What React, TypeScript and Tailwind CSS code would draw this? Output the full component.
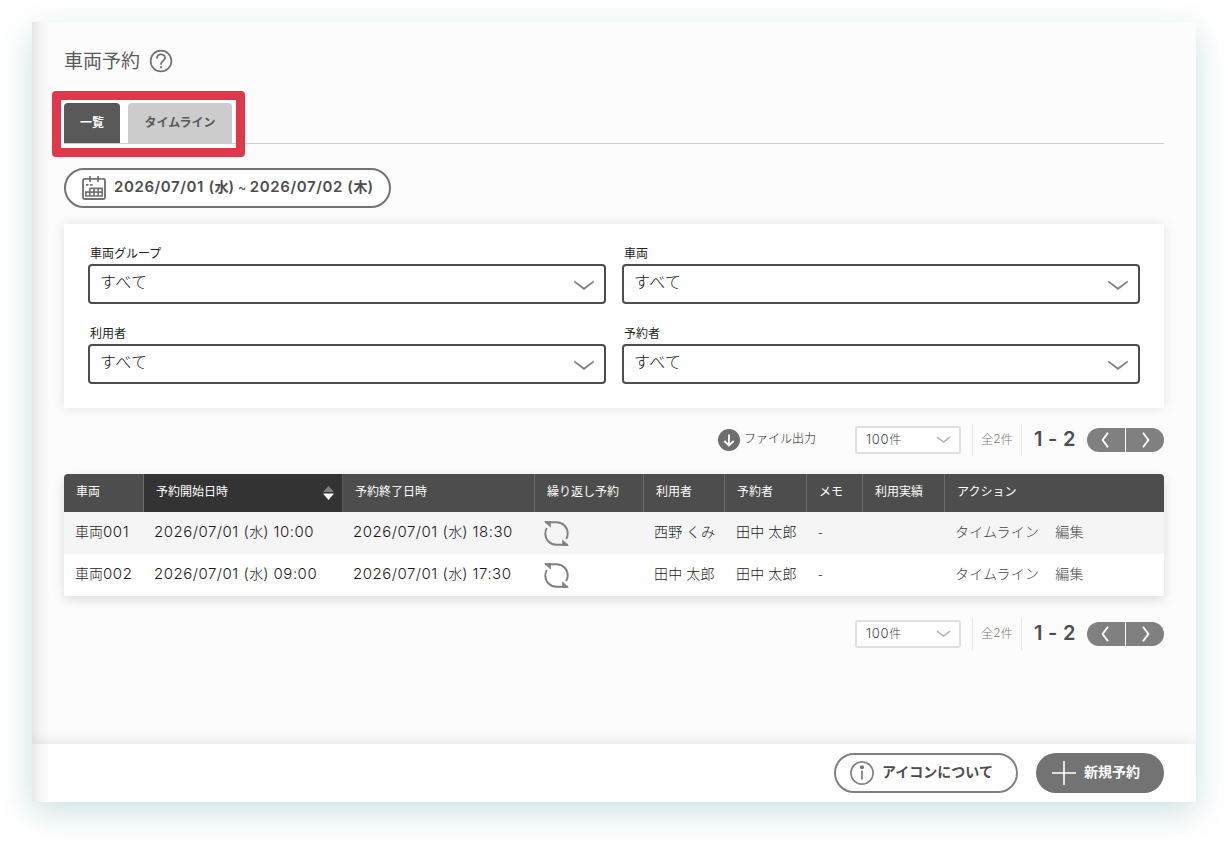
import { ReactNode } from "react";

type Reservation = {
  vehicle: string;
  start: string[];
  end: string[];
  user: string;
  reservedBy: string;
  memo: string;
};

const reservations: Reservation[] = [
  {
    vehicle: "001",
    start: ["2026/07/01", "10:00"],
    end: ["2026/07/01", "18:30"],
    user: "西野 くみ",
    reservedBy: "田中 太郎",
    memo: "-",
  },
  {
    vehicle: "002",
    start: ["2026/07/01", "09:00"],
    end: ["2026/07/01", "17:30"],
    user: "田中 太郎",
    reservedBy: "田中 太郎",
    memo: "-",
  },
];

const columns =
  "grid grid-cols-[80px_199px_192px_109px_81px_82px_56px_82px_219px]";

function HelpIcon() {
  return (
    <svg width="24" height="24" viewBox="0 0 24 24" fill="none" stroke="#737373">
      <circle cx="12" cy="12" r="10.4" strokeWidth="1.7" />
      <path d="M8 9.600c0-2.500 1.700-4.200 4-4.200s4 1.500 4 3.600c0 2.800-3.900 3-3.900 5.800v1" strokeWidth="1.8" />
      <path d="M12.100 17.200v2" strokeWidth="2" />
    </svg>
  );
}

function CalendarIcon() {
  return (
    <svg width="24" height="24" viewBox="0 0 24 24" fill="none" stroke="#737373" strokeWidth="1.9">
      <path d="M5 2.900H2.500a1.500 1.500 0 0 0-1.500 1.500v17.100A1.500 1.500 0 0 0 2.500 23h19a1.500 1.500 0 0 0 1.500-1.500V4.400a1.500 1.500 0 0 0-1.500-1.500h-2.300" />
      <path d="M5 2.900h14M8 0v6M16 0v6M4 8.800h2.600M8 8.800h2.600" strokeWidth="1.7" />
      <path d="M7.800 12.300h12.400v7.700H3.800v-3.900h16.400M7.800 12.300V20M12 12.300V20M16.200 12.300V20" strokeWidth="1.7" />
    </svg>
  );
}

function RepeatIcon() {
  return (
    <svg width="25" height="25" viewBox="0 0 25 25" fill="none" stroke="#808080" strokeWidth="1.900">
      <path d="M1 1.200h11.500c6.400 0 11.200 5 11.200 11.300 0 2.300-.5 4-1.500 5.600" />
      <path d="M24 23.800H12.500C6.100 23.800 1.300 18.800 1.300 12.500c0-2.300.5-4 1.500-5.600" />
      <path d="M0 .3h6.800v6.500zM25 24.700h-6.800v-6.500z" fill="#808080" stroke="none" />
    </svg>
  );
}

function DownloadIcon() {
  return (
    <svg width="22" height="22" viewBox="0 0 22 22" fill="none">
      <circle cx="11" cy="11" r="11" fill="#6e6e6e" />
      <path d="M11 5.500v10.800M6.300 12l4.700 4.500 4.700-4.500" stroke="#fff" strokeWidth="1.8" />
    </svg>
  );
}

function InfoIcon() {
  return (
    <svg width="24" height="24" viewBox="0 0 24 24" fill="none" stroke="#808080">
      <circle cx="12" cy="12" r="11.1" strokeWidth="1.6" />
      <circle cx="12" cy="6.200" r="2" fill="#737373" stroke="none" />
      <path d="M12 9.500v9" strokeWidth="1.8" />
    </svg>
  );
}

function SelectField({ label }: { label: string }) {
  return (
    <div>
      <div className="h-[18px] pl-[2px] text-xs leading-[13px] text-[#222]">{label}</div>
      <div className="flex h-10 items-center justify-between rounded border-2 border-[#4d4d4d] bg-white pr-[9px] pl-[10px]">
        <span className="pb-[6px] text-[16px] font-light tracking-[0.4px] text-[#111]">すべて</span>
        <svg className="mt-[3px]" width="22" height="11" viewBox="0 0 22 11" fill="none" stroke="#808080" strokeWidth="1.8">
          <path d="M1.200 1.400 11 8.800l9.800-7.400" />
        </svg>
      </div>
    </div>
  );
}

function Pager() {
  return (
    <div className="flex h-8 items-center">
      <div className="flex h-7 w-[106px] items-center justify-between rounded-[3px] border-2 border-[#e0e0e0] bg-white pr-[8px] pl-[9px] text-[12px] text-[#444]">
        <span className="pb-[1px] font-light">
          <span className="font-[Inter] text-[13px] tracking-[0.7px]">100</span>件
        </span>
        <svg width="15" height="8" viewBox="0 0 15 8" fill="none" stroke="#b3b3b3" strokeWidth="1.500">
          <path d="M1 1.200 7.500 6 14 1.200" />
        </svg>
      </div>
      <div className="ml-[11px] flex h-8 w-[50px] items-center justify-center border-x border-[#e6e6e6] pb-[3px] text-[12px] font-light text-[#777]">
        全<span className="font-[Inter]">2</span>件
      </div>
      <div className="w-[65px] pb-[3px] pl-[12px] font-[Inter] text-[20px] leading-none font-semibold tracking-[0.3px] whitespace-nowrap text-[#4d4d4d]">
        1 - 2
      </div>
      <div className="flex h-6 w-[77px] overflow-hidden rounded-full bg-[#808080]">
        <button className="flex w-[39px] items-center justify-center border-r border-[#fcfcfc] pr-[2px]">
          <svg width="8" height="16" viewBox="0 0 8 16" fill="none" stroke="#fff" strokeWidth="1.900">
            <path d="M7 .7 1.600 8 7 15.300" />
          </svg>
        </button>
        <button className="flex w-[38px] items-center justify-center pl-[2px]">
          <svg width="8" height="16" viewBox="0 0 8 16" fill="none" stroke="#fff" strokeWidth="1.900">
            <path d="M1 .7 6.400 8 1 15.300" />
          </svg>
        </button>
      </div>
    </div>
  );
}

function HeaderCell({ children, active }: { children: ReactNode; active?: boolean }) {
  return (
    <div
      className={
        active
          ? "flex items-center justify-between border-r border-[#5c5c5c] bg-[#333] pr-[8px] pl-[12px]"
          : "flex items-center border-r border-[#6b6b6b] pl-[12px] last:border-r-0"
      }
    >
      <span className="pb-[4px]">{children}</span>
      {active && (
        <svg className="-mt-[1px]" width="11" height="14" viewBox="0 0 11 14">
          <path d="M5.500 0 11 6H0z" fill="#808080" />
          <path d="M0 7.500h11L5.500 14z" fill="#fff" />
        </svg>
      )}
    </div>
  );
}

function DateTime({ value }: { value: string[] }) {
  return (
    <span className="whitespace-nowrap">
      <span className="font-[Inter] text-[15px] tracking-[0.5px]">{value[0]} (</span>水
      <span className="font-[Inter] text-[15px] tracking-[0.5px]">) {value[1]}</span>
    </span>
  );
}

export default function App() {
  return (
    <div className="h-[844px] w-[1228px] overflow-hidden bg-white px-8 pt-[22px] font-['Noto_Sans_CJK_JP',sans-serif]">
      <div className="relative flex h-[780px] w-[1164px] flex-col bg-[#fcfcfc] shadow-[0_10px_32px_rgba(0,100,110,0.2)]">
        {/* soft edge along the left side */}
        <div className="absolute inset-y-0 left-0 z-10 w-[18px] bg-linear-to-r from-black/9 via-black/3 to-transparent" />

        <main className="h-[722px] px-8 pt-[24px]">
          <div className="flex h-[30px] items-center gap-[9px]">
            <h1 className="pb-[2px] text-[19px] leading-[28px] text-[#595959]">車両予約</h1>
            <HelpIcon />
          </div>

          <div className="relative mt-[27px] h-[41px]">
            <div className="absolute -top-[12px] -left-[12px] h-[66px] w-[193px] rounded bg-white" />
            <div className="relative flex h-[41px] gap-2 border-b border-[#ccc] text-xs font-semibold">
              <button className="h-10 w-14 rounded-t bg-[#595959] pb-[3px] text-white">一覧</button>
              <button className="h-10 w-[104px] rounded-t bg-[#ccc] pb-[3px] text-[#595959]">タイムライン</button>
            </div>
            <div className="absolute -top-[12px] -left-[12px] h-[66px] w-[193px] rounded border-[9px] border-[#e1374b]" />
          </div>

          <button className="mt-[24px] flex h-10 w-[327px] items-center rounded-full border-2 border-[#737373] bg-white pl-[16px] text-[14px] font-semibold whitespace-nowrap text-[#4d4d4d]">
            <CalendarIcon />
            <span className="ml-[8px] pb-[1px]">
              <span className="font-[Inter] text-[15px] tracking-[0.6px]">2026/07/01 (</span>水
              <span className="font-[Inter] text-[15px]">) <span className="text-[12px]">~</span> </span>
              <span className="font-[Inter] text-[15px] tracking-[0.6px]">2026/07/02 (</span>木
              <span className="font-[Inter] text-[15px]">)</span>
            </span>
          </button>

          <section className="mt-[16px] grid h-[184px] grid-cols-2 content-start gap-x-4 gap-y-[22px] bg-white px-6 pt-[22px] shadow-[0_0_12px_rgba(0,0,0,0.1)]">
            <SelectField label="車両グループ" />
            <SelectField label="車両" />
            <SelectField label="利用者" />
            <SelectField label="予約者" />
          </section>

          <div className="mt-[16px] flex h-8 items-center justify-end">
            <button className="mr-[39px] flex items-center gap-[4px] text-[12px] font-light text-[#222]">
              <DownloadIcon />
              <span className="pb-[4px]">ファイル出力</span>
            </button>
            <Pager />
          </div>

          <section className="mt-[18px] rounded-t bg-white shadow-[0_4px_12px_rgba(0,0,0,0.13)]">
            <div className={`${columns} h-[38px] overflow-hidden rounded-t bg-[#4d4d4d] text-xs text-white`}>
              <HeaderCell>車両</HeaderCell>
              <HeaderCell active>予約開始日時</HeaderCell>
              <HeaderCell>予約終了日時</HeaderCell>
              <HeaderCell>繰り返し予約</HeaderCell>
              <HeaderCell>利用者</HeaderCell>
              <HeaderCell>予約者</HeaderCell>
              <HeaderCell>メモ</HeaderCell>
              <HeaderCell>利用実績</HeaderCell>
              <HeaderCell>アクション</HeaderCell>
            </div>
            {reservations.map((row) => (
              <div
                key={row.vehicle}
                className={`${columns} h-[42px] items-center text-[14px] font-light whitespace-nowrap text-[#1a1a1a] odd:bg-white even:bg-[#f5f5f5]`}
              >
                <div className="pb-[1px] pl-[11px]">
                  車両<span className="font-[Inter] text-[15px] tracking-[0.6px]">{row.vehicle}</span>
                </div>
                <div className="pb-[1px] pl-[10px]">
                  <DateTime value={row.start} />
                </div>
                <div className="pb-[1px] pl-[10px]">
                  <DateTime value={row.end} />
                </div>
                <div className="pl-[9px]">
                  <RepeatIcon />
                </div>
                <div className="pb-[3px] pl-[10px] tracking-[0.35px]">{row.user}</div>
                <div className="pb-[3px] pl-[11px] tracking-[0.35px]">{row.reservedBy}</div>
                <div className="pb-[3px] pl-[11px]">{row.memo}</div>
                <div />
                <div className="flex gap-4 pb-[3px] pl-[10px] tracking-[0.2px] text-[#444]">
                  <span>タイムライン</span>
                  <span>編集</span>
                </div>
              </div>
            ))}
          </section>

          <div className="mt-[22px] flex justify-end">
            <Pager />
          </div>
        </main>

        <footer className="flex h-[58px] items-center justify-end gap-[18px] bg-white pr-8 text-[14px] font-bold shadow-[0_0_14px_rgba(0,0,0,0.12)] [clip-path:inset(-20px_0_0_0)]">
          <button className="flex h-10 w-[184px] items-center rounded-full border-2 border-[#808080] bg-white pl-[14px] text-[#4d4d4d]">
            <InfoIcon />
            <span className="ml-[8px] pb-[3px]">アイコンについて</span>
          </button>
          <button className="flex h-10 w-32 items-center rounded-full bg-[#737373] pl-[16px] text-white">
            <svg width="24" height="24" viewBox="0 0 24 24" stroke="#fff" strokeWidth="1.600">
              <path d="M12 0v24M0 12h24" />
            </svg>
            <span className="ml-[8px] pb-[3px]">新規予約</span>
          </button>
        </footer>
      </div>
    </div>
  );
}
